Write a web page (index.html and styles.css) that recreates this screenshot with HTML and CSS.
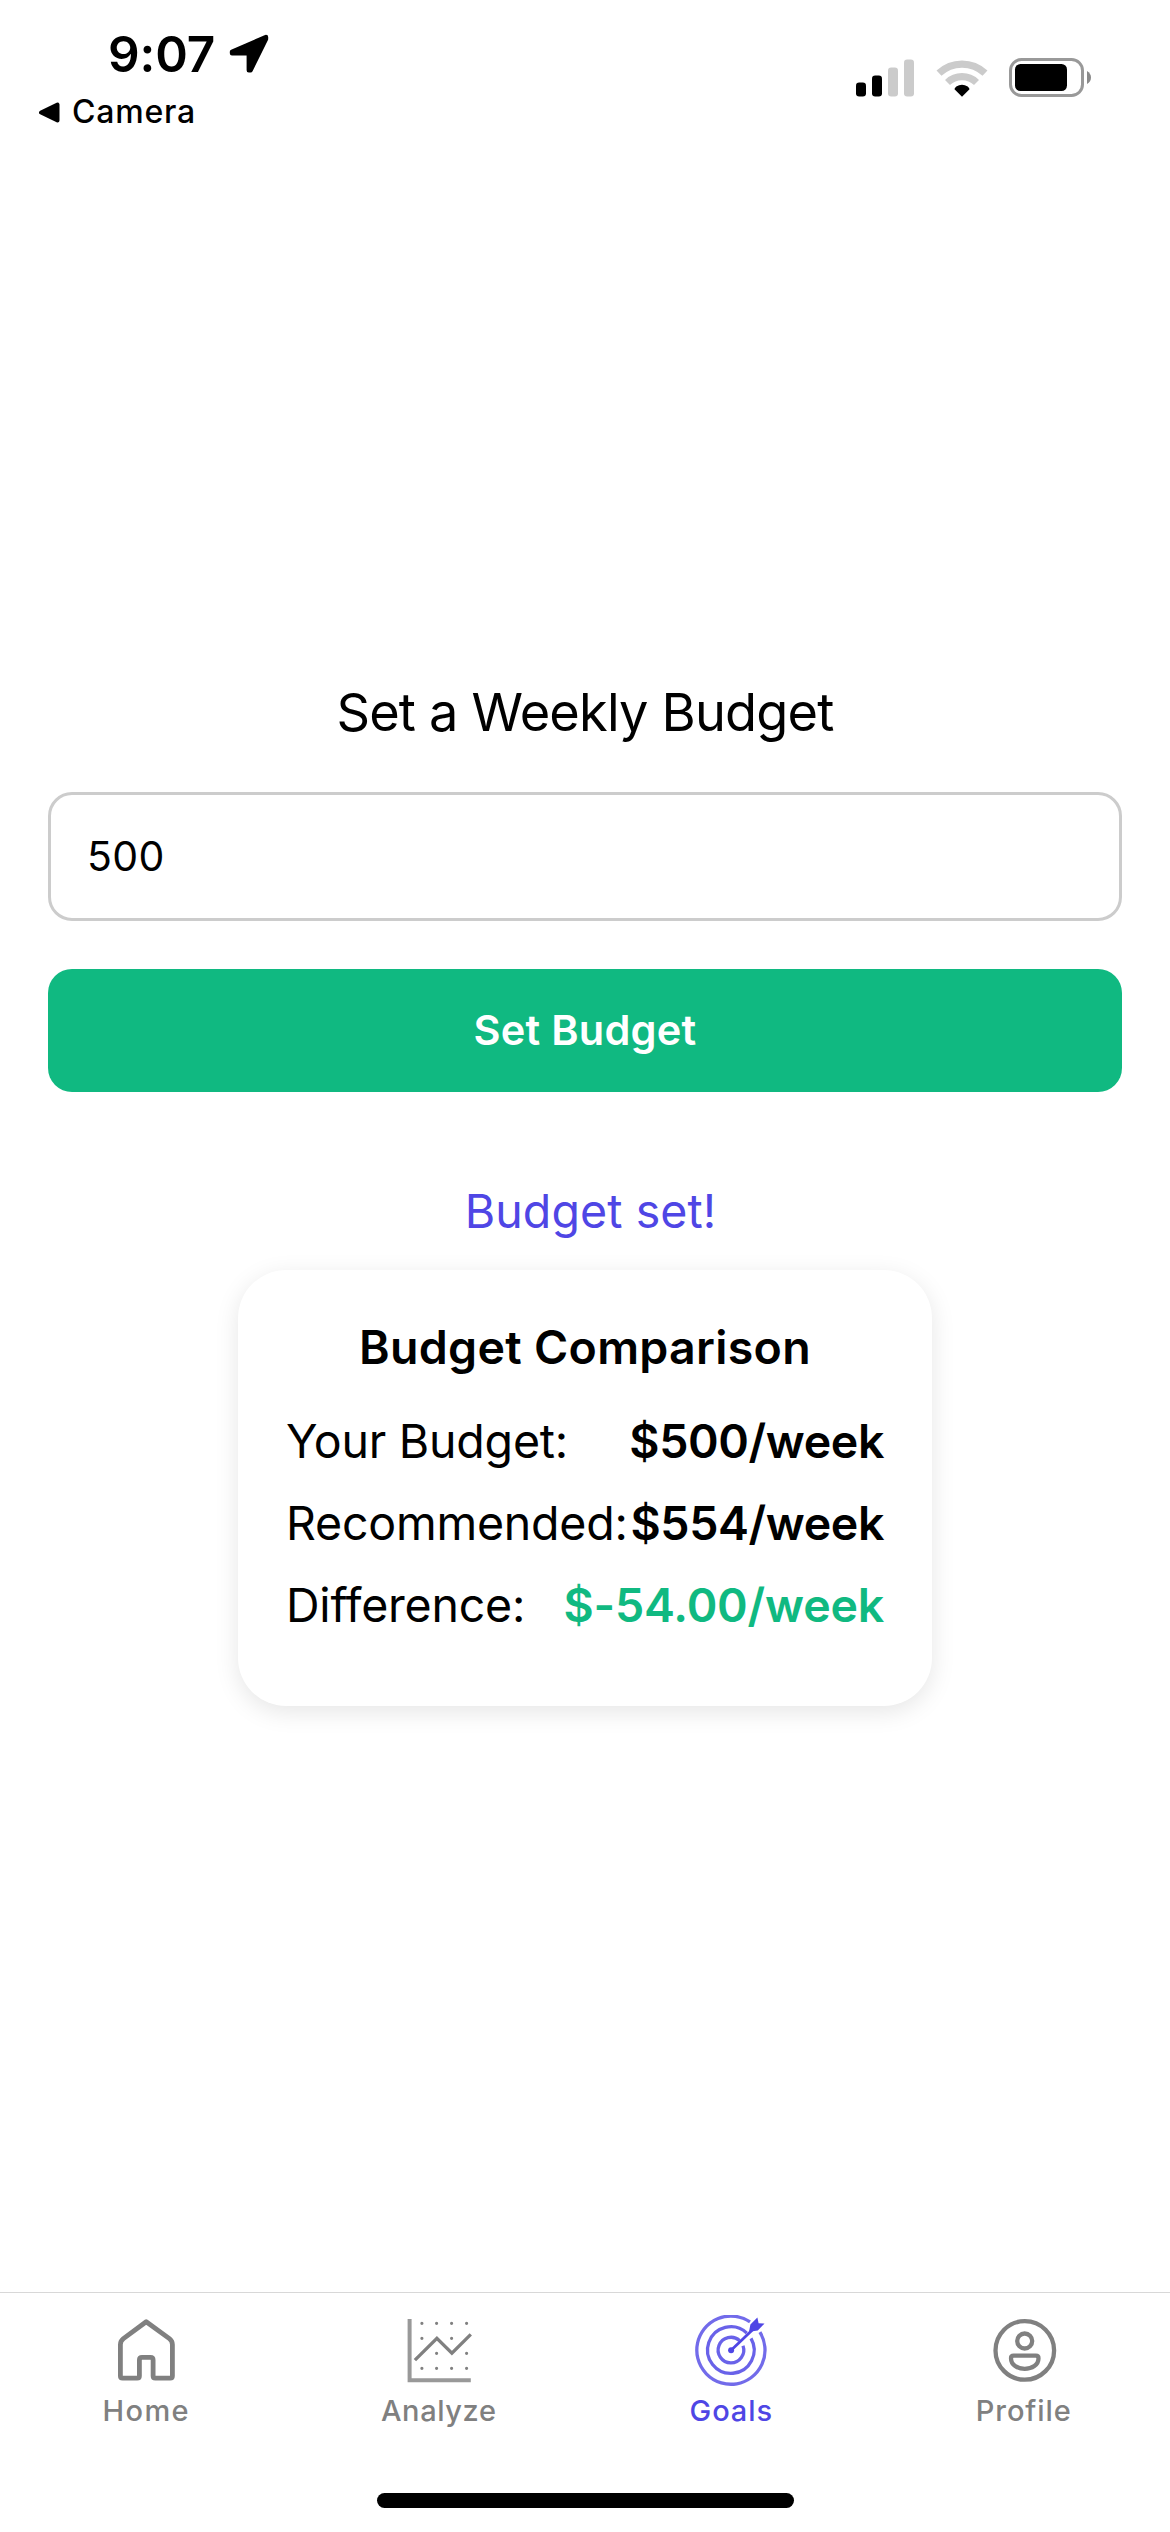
FILE: index.html
```html
<!DOCTYPE html>
<html lang="en">
<head>
  <meta charset="utf-8">
  <meta name="viewport" content="width=device-width">
  <title>Goals</title>
  <link rel="stylesheet" href="styles.css">
</head>
<body>
  <div class="screen">
    <header class="status">
      <div class="status-left">
        <div class="clock">
          <span>9:07</span>
          <svg class="location" viewBox="0 0 40 40" aria-hidden="true">
            <path d="M37 3 L3 17.8 V19.3 H19.8 V36.3 H21.6 L37 5 Z" fill="#000" stroke="#000" stroke-width="4.4" stroke-linejoin="round"/>
          </svg>
        </div>
        <div class="back">
          <svg class="back-arrow" viewBox="0 0 21 21" aria-hidden="true">
            <path d="M2 10.5 L18.5 2.5 V18.5 Z" fill="#000" stroke="#000" stroke-width="4" stroke-linejoin="round"/>
          </svg>
          <span>Camera</span>
        </div>
      </div>
      <div class="status-right">
        <svg class="signal" viewBox="0 0 58 38" aria-hidden="true">
          <rect x="0" y="23.500" width="10" height="14" rx="3.200"/>
          <rect x="16" y="16.500" width="10" height="21" rx="3.200"/>
          <rect x="32" y="8.500" width="10" height="29" rx="3.200" fill="#cbcbcb"/>
          <rect x="48" y="0.500" width="10" height="37" rx="3.200" fill="#cbcbcb"/>
        </svg>
        <svg class="wifi" viewBox="0 0 52 38" aria-hidden="true">
          <path d="M3 14.200 A33.500 33.500 0 0 1 49 14.200" fill="none" stroke="#cbcbcb" stroke-width="7.200"/>
          <path d="M11.500 23.500 A21 21 0 0 1 40.500 23.500" fill="none" stroke="#cbcbcb" stroke-width="7.200"/>
          <path d="M26 37.800 L18.500 30.300 Q18.500 29 20.300 27.600 Q26 24 31.700 27.600 Q33.500 29 33.500 30.300 Z"/>
        </svg>
        <svg class="battery" viewBox="0 0 83 39" aria-hidden="true">
          <rect x="1.500" y="1.500" width="72" height="36" rx="11" fill="none" stroke="#999" stroke-width="3"/>
          <rect x="6" y="6" width="52" height="27" rx="5.500"/>
          <path d="M78 13 Q82 15.500 82 19.500 T78 26 Z" fill="#8a8a8a"/>
        </svg>
      </div>
    </header>

    <main class="content">
      <h1 class="title">Set a Weekly Budget</h1>
      <input class="amount" type="text" value="500" aria-label="Weekly budget">
      <button class="submit" type="button">Set Budget</button>
      <p class="message">Budget set!</p>
      <section class="card">
        <h2 class="card-title">Budget Comparison</h2>
        <dl class="rows">
          <div class="row"><dt>Your Budget:</dt><dd>$500/week</dd></div>
          <div class="row"><dt>Recommended:</dt><dd>$554/week</dd></div>
          <div class="row"><dt>Difference:</dt><dd class="positive">$-54.00/week</dd></div>
        </dl>
      </section>
    </main>

    <nav class="tabs">
      <a class="tab home">
        <svg class="icon" viewBox="0 0 72 72" fill="none" stroke="currentColor" stroke-width="4.800" stroke-linejoin="round" aria-hidden="true">
          <path d="M36.200 6.700 L13.400 23.600 Q10.400 26 10.400 29.500 V61 Q10.400 63.200 12.600 63.200 H27.200 Q29.400 63.200 29.400 61 V45 Q29.400 42.400 32 42.400 H40.500 Q43.100 42.400 43.100 45 V61 Q43.100 63.200 45.300 63.200 H60.200 Q62.400 63.200 62.400 61 V29.500 Q62.400 26 59.400 23.600 Z"/>
        </svg>
        <span>Home</span>
      </a>
      <a class="tab analyze">
        <svg class="icon" viewBox="0 0 72 72" fill="none" stroke="currentColor" aria-hidden="true">
          <path d="M6.600 4 V65.200 H67.800" stroke="#999" stroke-width="4"/>
          <path d="M11.900 45.200 L33.900 23.300 L48.900 38.200 L67.800 19.300" stroke-width="3.300"/>
          <path d="M18.900 8.300h0M33.600 8.300h0M48.600 8.300h0M63.600 8.300h0M18.900 23.300h0M48.600 23.300h0M33.600 38.300h0M63.600 38.300h0M18.900 53.300h0M33.600 53.300h0M48.600 53.300h0M63.600 53.300h0" stroke-width="3.200" stroke-linecap="round"/>
        </svg>
        <span>Analyze</span>
      </a>
      <a class="tab goals active">
        <svg class="icon" viewBox="0 0 72 72" fill="none" stroke="currentColor" stroke-width="3.300" aria-hidden="true">
          <path d="M55 6.900 A34.100 34.100 0 1 0 64.900 17.200" stroke-opacity=".8"/>
          <path d="M51.800 18.100 A23.300 23.300 0 1 0 56 23.400" stroke-opacity=".85"/>
          <path d="M44.500 25.600 A12.800 12.800 0 1 0 48 30.800" stroke-opacity=".85"/>
          <path d="M36.100 35.300 L61 11.500" stroke-width="2.800"/>
          <circle cx="36.100" cy="35.300" r="3" fill="currentColor" stroke="none"/>
          <path d="M54 16.800 L55.400 9.500 L62.400 2.600 L63.600 8.200 L69.500 8.600 L62.800 15.600 Z" fill="currentColor" stroke="none"/>
        </svg>
        <span>Goals</span>
      </a>
      <a class="tab profile">
        <svg class="icon" viewBox="0 0 72 72" fill="none" stroke="currentColor" stroke-width="4.300" aria-hidden="true">
          <circle cx="36.800" cy="35.400" r="29.300"/>
          <circle cx="36.700" cy="26" r="7.500"/>
          <path d="M25.500 40.700 H48 Q50.500 40.700 50.500 43.200 C50.500 50 44 53.800 36.700 53.800 C29.500 53.800 23 50 23 43.200 Q23 40.700 25.500 40.700 Z"/>
        </svg>
        <span>Profile</span>
      </a>
    </nav>
    <div class="home-indicator"></div>
  </div>
</body>
</html>
```
FILE: styles.css
```css
* {
  box-sizing: border-box;
  margin: 0;
  padding: 0;
}

body {
  background: #fff;
  color: #000;
  font-family: Inter, "Liberation Sans", sans-serif;
}

.screen {
  display: flex;
  flex-direction: column;
  width: 1170px;
  height: 2532px;
}

svg {
  display: block;
  flex: none;
}

/* Status bar */
.status {
  display: flex;
  justify-content: space-between;
  height: 150px;
  padding: 24px 78px 0 39px;
}

.status-left {
  display: flex;
  flex-direction: column;
  gap: 8px;
}

.clock {
  display: flex;
  align-items: center;
  gap: 14px;
  padding-left: 69px;
  font-size: 49.5px;
  font-weight: 600;
  line-height: 60px;
  letter-spacing: -0.14px;
}

.location {
  width: 40px;
  height: 40px;
}

.back {
  display: flex;
  align-items: center;
  gap: 12px;
  font-size: 32px;
  font-weight: 500;
  line-height: 40px;
  letter-spacing: 0.8px;
}

.back-arrow {
  width: 21px;
  height: 21px;
}

.status-right {
  display: flex;
  align-items: center;
  height: 107px;
}

.signal {
  width: 58px;
  height: 38px;
  margin-right: 21.5px;
}

.wifi {
  width: 52px;
  height: 38px;
  margin-right: 21.5px;
}

.battery {
  width: 83px;
  height: 39px;
}

/* Budget form */
.content {
  display: flex;
  flex: 1;
  flex-direction: column;
  align-items: center;
  padding: 530px 48px 0;
}

.title {
  margin-bottom: 48px;
  font-size: 52.3px;
  font-weight: 400;
  line-height: 64px;
  letter-spacing: -0.8px;
}

.amount {
  width: 100%;
  height: 129px;
  margin-bottom: 48px;
  padding: 0 36px 2px;
  border: 3px solid #ccc;
  border-radius: 24px;
  background: #fff;
  color: #000;
  font: 400 41px Inter, "Liberation Sans", sans-serif;
  letter-spacing: 0.36px;
  outline: none;
}

.submit {
  width: 100%;
  height: 123px;
  padding-bottom: 2px;
  border: 0;
  border-radius: 24px;
  background: #10b981;
  color: #fff;
  font: 600 41.5px Inter, "Liberation Sans", sans-serif;
  letter-spacing: 0.24px;
}

.message {
  margin: 90px 0 30px;
  padding-left: 11px;
  color: #4f46e5;
  font-size: 46.5px;
  line-height: 58px;
  letter-spacing: 0.08px;
}

.card {
  width: 694px;
  padding: 48px 48px 72px;
  border-radius: 48px;
  background: #fff;
  box-shadow: 0 6px 24px rgba(0, 0, 0, 0.1);
  font-size: 46.5px;
  line-height: 58px;
}

.card-title {
  margin-bottom: 36px;
  font-size: inherit;
  font-weight: 600;
  letter-spacing: 0.29px;
  text-align: center;
}

.rows {
  display: flex;
  flex-direction: column;
  gap: 24px;
}

.row {
  display: flex;
  justify-content: space-between;
  white-space: nowrap;
  letter-spacing: -0.22px;
}

.row dd {
  font-weight: 600;
  letter-spacing: -0.4px;
}

.row .positive {
  color: #10b981;
  letter-spacing: -0.2px;
}

/* Tab bar */
.tabs {
  display: grid;
  grid-template-columns: repeat(4, 1fr);
  height: 201px;
  padding-top: 22px;
  border-top: 1px solid #d8d8d8;
}

.tab {
  display: flex;
  flex-direction: column;
  align-items: center;
  gap: 6px;
  color: #808080;
  font-size: 29px;
  font-weight: 500;
  line-height: 36px;
  letter-spacing: 0.9px;
}

.tab.active {
  color: #4f46e5;
}

.icon {
  width: 72px;
  height: 72px;
}

.home {
  letter-spacing: 1.38px;
}

.analyze {
  letter-spacing: 0.6px;
}

.home-indicator {
  width: 417px;
  height: 15px;
  margin: 0 auto 24px;
  border-radius: 8px;
  background: #000;
}
```
